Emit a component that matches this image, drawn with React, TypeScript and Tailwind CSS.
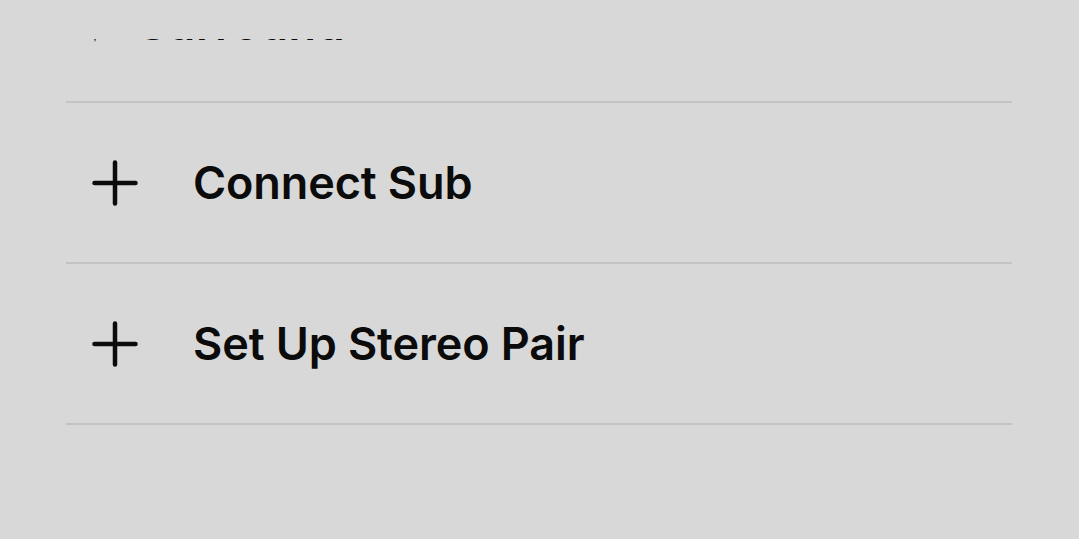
import React from 'react';

const PlusIcon: React.FC = () => (
  <svg width="46" height="46" viewBox="0 0 46 46" fill="none" stroke="#0b0b0b" strokeWidth="4.5" strokeLinecap="round">
    <line x1="23" y1="2.5" x2="23" y2="43.5" />
    <line x1="2.5" y1="23" x2="43.5" y2="23" />
  </svg>
);

const TipIcon: React.FC = () => (
  <svg width="46" height="46" viewBox="0 0 46 46" fill="#3a3a3a">
    <path d="M-4 20 L10 20 L3 43 Z" />
  </svg>
);

type Row = { label: string; icon: React.ReactNode; compact?: boolean };

const rows: Row[] = [
  { label: 'Surround', icon: <TipIcon />, compact: true },
  { label: 'Connect Sub', icon: <PlusIcon /> },
  { label: 'Set Up Stereo Pair', icon: <PlusIcon /> },
];

export default function App() {
  return (
    <div
      className="relative w-[1079px] h-[539px] overflow-hidden bg-[#d8d8d8]"
      style={{ fontFamily: 'Inter, "Noto Sans", sans-serif' }}
    >
      <div className="mx-[66px] mt-[-58px] w-[946px]">
        {rows.map(row => (
          <div
            key={row.label}
            className="flex items-center h-[161px] border-b-2 border-[#c3c3c3] pl-[26px]"
          >
            <div className="w-[46px] h-[46px] shrink-0">{row.icon}</div>
            <span
              className={
                row.compact
                  ? 'ml-0 mt-[4px] text-[45px] leading-none font-semibold text-[#0b0b0b] tracking-[0.6px]'
                  : 'ml-[55px] text-[45px] leading-none font-semibold text-[#0b0b0b] tracking-[-0.1px]'
              }
            >
              {row.label}
            </span>
          </div>
        ))}
      </div>
      <div className="absolute left-0 top-0 w-full h-[39px] bg-[#d8d8d8]" />
    </div>
  );
}
